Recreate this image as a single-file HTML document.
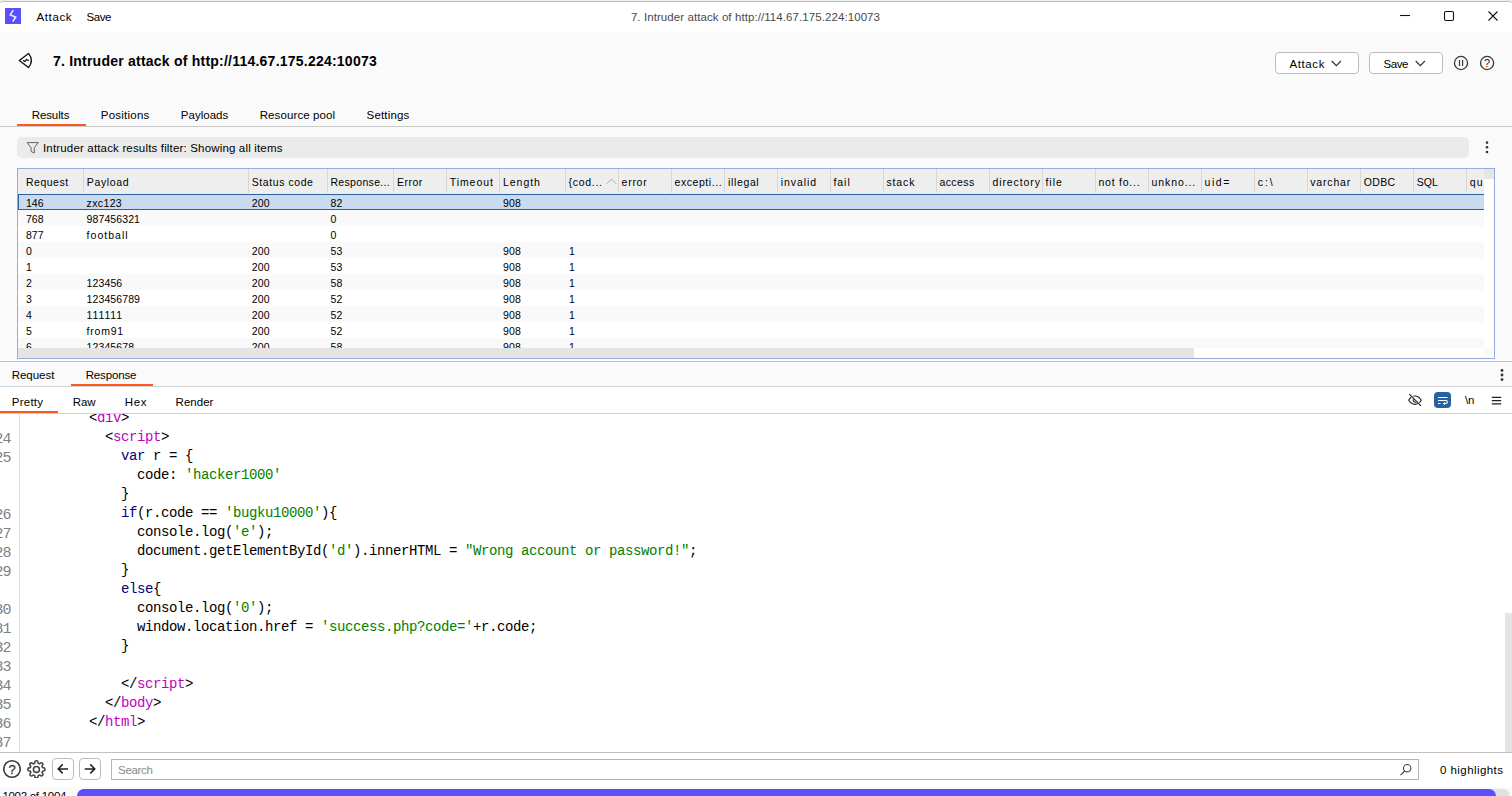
<!DOCTYPE html>
<html><head><meta charset="utf-8"><title>7. Intruder attack of http://114.67.175.224:10073</title>
<style>
*{box-sizing:border-box;margin:0;padding:0}
html,body{width:1512px;height:796px;overflow:hidden;background:#fafafa;font-family:"Liberation Sans",sans-serif;color:#000;font-size:11.5px}
.a{position:absolute;white-space:nowrap}
#titlebar{left:0;top:0;width:1512px;height:32px;background:#fff;border-top:1px solid #eee;box-shadow:inset 0 1px 0 #bdbdbd}
.t{line-height:16px;height:16px}
.hl{height:1px;background:#c9c9c9}
.btn{border:1px solid #c2baba;border-radius:4px;background:#fff}
/* table */
#tbl{left:17px;top:168px;width:1478px;height:191px;border:1px solid #8fb0dc;background:#fff;overflow:hidden}
#thead{left:0;top:0;width:1476px;height:25px;background:#eeeeee}
.th{top:5px;line-height:16px}
.sep{top:0;width:1px;height:24px;background:#d6d6d6}
.row{left:0;width:1466px;height:16px}
.row span{position:absolute;top:0;line-height:16px;white-space:nowrap}
.g{background:#f9f9f9}
/* code */
#code{left:0;top:414px;width:1512px;height:338px;background:#fff;overflow:hidden}
.cl{left:0;height:19px;line-height:19px;font-family:"Liberation Mono",monospace;font-size:14px;letter-spacing:-0.401px;white-space:pre;color:#000}
.ln{color:#808080;font-size:15px;letter-spacing:-1.001px}
.tag{color:#c000c0}.kw{color:#000080}.str{color:#008000}
</style></head><body>
<div class="a" id="titlebar"></div>
<div class="a" style="left:0;top:2px;width:1px;height:1px;background:#c4c4c4"></div><div class="a" style="left:1511px;top:2px;width:1px;height:1px;background:#c4c4c4"></div><div class="a" style="left:0;top:1px;width:2px;height:1px;background:#e4e4e4"></div><div class="a" style="left:1510px;top:1px;width:2px;height:1px;background:#e4e4e4"></div>
<div class="a" style="left:5px;top:8px;width:16px;height:16px;background:#5c50fe"><svg width="16" height="16" viewBox="0 0 16 16"><path d="M8.300 2.200 L5.200 6.900 L10.700 9 L7.700 13.700" fill="none" stroke="#fff" stroke-width="1.500" stroke-linejoin="miter" opacity="0.900"/></svg></div>
<div class="a t" style="left:36.40px;top:9px;font-size:11.5px;letter-spacing:0.646px;">Attack</div>
<div class="a t" style="left:86.40px;top:9px;font-size:11.5px;letter-spacing:-0.406px;">Save</div>
<div class="a t" style="left:630.90px;top:9px;font-size:11.5px;letter-spacing:0.079px;color:#4a4a4a">7. Intruder attack of http://114.67.175.224:10073</div>
<svg class="a" style="left:1396px;top:7px" width="110" height="18" viewBox="0 0 110 18"><g fill="none" stroke="#111" stroke-width="1.1"><path d="M4 8.5h10"/><rect x="48.500" y="4.500" width="9" height="9" rx="1.500"/><path d="M92.500 4.500l9 9M101.500 4.500l-9 9"/></g></svg>

<svg class="a" style="left:18px;top:52px" width="18" height="18" viewBox="0 0 18 18"><path d="M1.300 8.500 L10.500 1.400 Q16.300 8.500 10.500 15.600 Z" fill="none" stroke="#111" stroke-width="1.300" stroke-linejoin="round"/><path d="M5.500 8.600 L7.100 9.500 L8.300 7.500 L10.300 8.400" fill="none" stroke="#111" stroke-width="1.250" stroke-linejoin="round" stroke-linecap="round"/></svg>
<div class="a t" style="left:52.90px;top:53px;font-size:14px;letter-spacing:0.229px;font-weight:bold">7. Intruder attack of http://114.67.175.224:10073</div>

<div class="a btn" style="left:1275px;top:52px;width:84px;height:22px"></div>
<div class="a t" style="left:1289.40px;top:56px;font-size:11.5px;letter-spacing:0.606px;">Attack</div>
<svg class="a" style="left:1330px;top:59px" width="12" height="9" viewBox="0 0 12 9"><path d="M1.700 2l4.600 4.600L10.900 2" fill="none" stroke="#333" stroke-width="1.200"/></svg>
<div class="a btn" style="left:1369px;top:52px;width:74px;height:22px"></div>
<div class="a t" style="left:1383.40px;top:56px;font-size:11.5px;letter-spacing:-0.406px;">Save</div>
<svg class="a" style="left:1414px;top:59px" width="12" height="9" viewBox="0 0 12 9"><path d="M1.700 2l4.600 4.600L10.900 2" fill="none" stroke="#333" stroke-width="1.200"/></svg>
<svg class="a" style="left:1453px;top:55px" width="16" height="16" viewBox="0 0 16 16"><circle cx="8" cy="8" r="6.550" fill="none" stroke="#3a3a3a" stroke-width="1.300"/><path d="M6.500 5v6M9.600 5v6" stroke="#3a3a3a" stroke-width="1.200"/></svg>
<svg class="a" style="left:1479px;top:55px" width="16" height="16" viewBox="0 0 16 16"><circle cx="8.100" cy="8" r="6.550" fill="none" stroke="#3a3a3a" stroke-width="1.300"/><text x="8.100" y="12" font-size="11" text-anchor="middle" font-family="Liberation Sans, sans-serif" fill="#222">?</text></svg>

<!-- tabs -->
<div class="a t" style="left:31.80px;top:107px;font-size:11.5px;letter-spacing:-0.127px;">Results</div>
<div class="a t" style="left:100.80px;top:107px;font-size:11.5px;letter-spacing:0.229px;">Positions</div>
<div class="a t" style="left:180.80px;top:107px;font-size:11.5px;letter-spacing:0.013px;">Payloads</div>
<div class="a t" style="left:259.70px;top:107px;font-size:11.5px;letter-spacing:0.104px;">Resource pool</div>
<div class="a t" style="left:366.60px;top:107px;font-size:11.5px;letter-spacing:0.162px;">Settings</div>
<div class="a" style="left:17px;top:124px;width:69px;height:2px;background:#fe5a1f"></div>
<div class="a hl" style="left:0;top:126px;width:1512px"></div>

<!-- filter -->
<div class="a" style="left:17px;top:137px;width:1452px;height:21px;background:#ebebeb;border-radius:5px"></div>
<svg class="a" style="left:25px;top:141px" width="15" height="14" viewBox="0 0 15 14"><path d="M2 1.600h11.300L9.300 6.600v5.400L6.100 10.500V6.600Z" fill="none" stroke="#666" stroke-width="1"/></svg>
<div class="a t" style="left:43.00px;top:140px;font-size:11.5px;letter-spacing:0.167px;">Intruder attack results filter: Showing all items</div>
<svg class="a" style="left:1484px;top:140px" width="6" height="15" viewBox="0 0 6 15"><g fill="#333"><circle cx="3" cy="2.600" r="1.300"/><circle cx="3" cy="7.300" r="1.300"/><circle cx="3" cy="12" r="1.300"/></g></svg>

<!-- table -->
<div class="a" id="tbl">
<div class="a" id="thead"></div>
<div class="a" style="left:1466px;top:0;width:10px;height:10px;background:#e6e6e6"></div>
<div class="a" style="left:1466px;top:10px;width:10px;height:169px;background:#fff"></div>
<div class="a t" style="left:7.90px;top:5px;font-size:10.5px;letter-spacing:0.532px;">Request</div>
<div class="a t" style="left:68.80px;top:5px;font-size:10.5px;letter-spacing:0.658px;">Payload</div>
<div class="a t" style="left:233.80px;top:5px;font-size:10.5px;letter-spacing:0.565px;">Status code</div>
<div class="a t" style="left:312.40px;top:5px;font-size:10.5px;letter-spacing:0.335px;">Response...</div>
<div class="a t" style="left:378.90px;top:5px;font-size:10.5px;letter-spacing:0.514px;">Error</div>
<div class="a t" style="left:431.70px;top:5px;font-size:10.5px;letter-spacing:0.942px;">Timeout</div>
<div class="a t" style="left:485.00px;top:5px;font-size:10.5px;letter-spacing:0.955px;">Length</div>
<div class="a t" style="left:550.50px;top:5px;font-size:10.5px;letter-spacing:0.716px;">{cod...</div>
<div class="a t" style="left:603.60px;top:5px;font-size:10.5px;letter-spacing:0.732px;">error</div>
<div class="a t" style="left:656.60px;top:5px;font-size:10.5px;letter-spacing:0.552px;">excepti...</div>
<div class="a t" style="left:710.10px;top:5px;font-size:10.5px;letter-spacing:0.623px;">illegal</div>
<div class="a t" style="left:762.70px;top:5px;font-size:10.5px;letter-spacing:0.936px;">invalid</div>
<div class="a t" style="left:815.40px;top:5px;font-size:10.5px;letter-spacing:0.987px;">fail</div>
<div class="a t" style="left:868.40px;top:5px;font-size:10.5px;letter-spacing:0.871px;">stack</div>
<div class="a t" style="left:921.40px;top:5px;font-size:10.5px;letter-spacing:0.422px;">access</div>
<div class="a t" style="left:974.40px;top:5px;font-size:10.5px;letter-spacing:0.917px;">directory</div>
<div class="a t" style="left:1027.40px;top:5px;font-size:10.5px;letter-spacing:1.021px;">file</div>
<div class="a t" style="left:1080.40px;top:5px;font-size:10.5px;letter-spacing:0.784px;">not fo...</div>
<div class="a t" style="left:1133.50px;top:5px;font-size:10.5px;letter-spacing:0.904px;">unkno...</div>
<div class="a t" style="left:1186.50px;top:5px;font-size:10.5px;letter-spacing:1.581px;">uid=</div>
<div class="a t" style="left:1239.80px;top:5px;font-size:10.5px;letter-spacing:1.853px;">c:\</div>
<div class="a t" style="left:1292.30px;top:5px;font-size:10.5px;letter-spacing:0.814px;">varchar</div>
<div class="a t" style="left:1345.80px;top:5px;font-size:10.5px;letter-spacing:0.352px;">ODBC</div>
<div class="a t" style="left:1398.80px;top:5px;font-size:10.5px;letter-spacing:0.042px;">SQL</div>
<div class="a t" style="left:1451.80px;top:5px;font-size:10.5px;letter-spacing:1.112px;">qu</div>
<div class="a sep" style="left:65px"></div>
<div class="a sep" style="left:230px"></div>
<div class="a sep" style="left:309px"></div>
<div class="a sep" style="left:375px"></div>
<div class="a sep" style="left:428px"></div>
<div class="a sep" style="left:481px"></div>
<div class="a sep" style="left:547px"></div>
<div class="a sep" style="left:600px"></div>
<div class="a sep" style="left:653px"></div>
<div class="a sep" style="left:706px"></div>
<div class="a sep" style="left:759px"></div>
<div class="a sep" style="left:812px"></div>
<div class="a sep" style="left:865px"></div>
<div class="a sep" style="left:918px"></div>
<div class="a sep" style="left:971px"></div>
<div class="a sep" style="left:1024px"></div>
<div class="a sep" style="left:1077px"></div>
<div class="a sep" style="left:1130px"></div>
<div class="a sep" style="left:1183px"></div>
<div class="a sep" style="left:1236px"></div>
<div class="a sep" style="left:1289px"></div>
<div class="a sep" style="left:1342px"></div>
<div class="a sep" style="left:1395px"></div>
<div class="a sep" style="left:1448px"></div>
<svg class="a" style="left:588px;top:9px" width="11" height="7" viewBox="0 0 11 7"><path d="M0.800 5.800l4.700-4.700 4.700 4.700" fill="none" stroke="#aaa" stroke-width="1"/></svg>
<div class="row a" style="top:25px;background:#c9daf1;border-top:1px solid #2d62a0;border-bottom:1px solid #2d62a0;border-left:1px solid #2d62a0;"></div>
<div class="a t" style="left:7.90px;top:26px;font-size:10.5px;letter-spacing:0.129px;">146</div>
<div class="a t" style="left:68.60px;top:26px;font-size:10.5px;letter-spacing:0.364px;">zxc123</div>
<div class="a t" style="left:233.80px;top:26px;font-size:10.5px;letter-spacing:0.129px;">200</div>
<div class="a t" style="left:312.40px;top:26px;font-size:10.5px;letter-spacing:0.173px;">82</div>
<div class="a t" style="left:485.00px;top:26px;font-size:10.5px;letter-spacing:0.129px;">908</div>
<div class="row a g" style="top:41px;"></div>
<div class="a t" style="left:7.90px;top:42px;font-size:10.5px;letter-spacing:0.129px;">768</div>
<div class="a t" style="left:68.60px;top:42px;font-size:10.5px;letter-spacing:0.101px;">987456321</div>
<div class="a t" style="left:312.40px;top:42px;font-size:10.5px;letter-spacing:0.086px;">0</div>
<div class="row a" style="top:57px;"></div>
<div class="a t" style="left:7.90px;top:58px;font-size:10.5px;letter-spacing:0.129px;">877</div>
<div class="a t" style="left:68.60px;top:58px;font-size:10.5px;letter-spacing:1.020px;">football</div>
<div class="a t" style="left:312.40px;top:58px;font-size:10.5px;letter-spacing:0.086px;">0</div>
<div class="row a g" style="top:73px;"></div>
<div class="a t" style="left:7.90px;top:74px;font-size:10.5px;letter-spacing:0.086px;">0</div>
<div class="a t" style="left:233.80px;top:74px;font-size:10.5px;letter-spacing:0.129px;">200</div>
<div class="a t" style="left:312.40px;top:74px;font-size:10.5px;letter-spacing:0.173px;">53</div>
<div class="a t" style="left:485.00px;top:74px;font-size:10.5px;letter-spacing:0.129px;">908</div>
<div class="a t" style="left:550.90px;top:74px;font-size:10.5px;letter-spacing:0.086px;">1</div>
<div class="row a" style="top:89px;"></div>
<div class="a t" style="left:7.90px;top:90px;font-size:10.5px;letter-spacing:0.086px;">1</div>
<div class="a t" style="left:233.80px;top:90px;font-size:10.5px;letter-spacing:0.129px;">200</div>
<div class="a t" style="left:312.40px;top:90px;font-size:10.5px;letter-spacing:0.173px;">53</div>
<div class="a t" style="left:485.00px;top:90px;font-size:10.5px;letter-spacing:0.129px;">908</div>
<div class="a t" style="left:550.90px;top:90px;font-size:10.5px;letter-spacing:0.086px;">1</div>
<div class="row a g" style="top:105px;"></div>
<div class="a t" style="left:7.90px;top:106px;font-size:10.5px;letter-spacing:0.086px;">2</div>
<div class="a t" style="left:68.60px;top:106px;font-size:10.5px;letter-spacing:0.107px;">123456</div>
<div class="a t" style="left:233.80px;top:106px;font-size:10.5px;letter-spacing:0.129px;">200</div>
<div class="a t" style="left:312.40px;top:106px;font-size:10.5px;letter-spacing:0.173px;">58</div>
<div class="a t" style="left:485.00px;top:106px;font-size:10.5px;letter-spacing:0.129px;">908</div>
<div class="a t" style="left:550.90px;top:106px;font-size:10.5px;letter-spacing:0.086px;">1</div>
<div class="row a" style="top:121px;"></div>
<div class="a t" style="left:7.90px;top:122px;font-size:10.5px;letter-spacing:0.086px;">3</div>
<div class="a t" style="left:68.60px;top:122px;font-size:10.5px;letter-spacing:0.101px;">123456789</div>
<div class="a t" style="left:233.80px;top:122px;font-size:10.5px;letter-spacing:0.129px;">200</div>
<div class="a t" style="left:312.40px;top:122px;font-size:10.5px;letter-spacing:0.173px;">52</div>
<div class="a t" style="left:485.00px;top:122px;font-size:10.5px;letter-spacing:0.129px;">908</div>
<div class="a t" style="left:550.90px;top:122px;font-size:10.5px;letter-spacing:0.086px;">1</div>
<div class="row a g" style="top:137px;"></div>
<div class="a t" style="left:7.90px;top:138px;font-size:10.5px;letter-spacing:0.086px;">4</div>
<div class="a t" style="left:68.60px;top:138px;font-size:10.5px;letter-spacing:0.885px;">111111</div>
<div class="a t" style="left:233.80px;top:138px;font-size:10.5px;letter-spacing:0.129px;">200</div>
<div class="a t" style="left:312.40px;top:138px;font-size:10.5px;letter-spacing:0.173px;">52</div>
<div class="a t" style="left:485.00px;top:138px;font-size:10.5px;letter-spacing:0.129px;">908</div>
<div class="a t" style="left:550.90px;top:138px;font-size:10.5px;letter-spacing:0.086px;">1</div>
<div class="row a" style="top:153px;"></div>
<div class="a t" style="left:7.90px;top:154px;font-size:10.5px;letter-spacing:0.086px;">5</div>
<div class="a t" style="left:68.60px;top:154px;font-size:10.5px;letter-spacing:0.782px;">from91</div>
<div class="a t" style="left:233.80px;top:154px;font-size:10.5px;letter-spacing:0.129px;">200</div>
<div class="a t" style="left:312.40px;top:154px;font-size:10.5px;letter-spacing:0.173px;">52</div>
<div class="a t" style="left:485.00px;top:154px;font-size:10.5px;letter-spacing:0.129px;">908</div>
<div class="a t" style="left:550.90px;top:154px;font-size:10.5px;letter-spacing:0.086px;">1</div>
<div class="row a g" style="top:169px;"></div>
<div class="a t" style="left:7.90px;top:170px;font-size:10.5px;letter-spacing:0.086px;">6</div>
<div class="a t" style="left:68.60px;top:170px;font-size:10.5px;letter-spacing:0.103px;">12345678</div>
<div class="a t" style="left:233.80px;top:170px;font-size:10.5px;letter-spacing:0.129px;">200</div>
<div class="a t" style="left:312.40px;top:170px;font-size:10.5px;letter-spacing:0.173px;">58</div>
<div class="a t" style="left:485.00px;top:170px;font-size:10.5px;letter-spacing:0.129px;">908</div>
<div class="a t" style="left:550.90px;top:170px;font-size:10.5px;letter-spacing:0.086px;">1</div>
<div class="a" style="left:0;top:179px;width:1476px;height:10px;background:#fff"></div>
<div class="a" style="left:0;top:179px;width:1176px;height:10px;background:#e4e4e4"></div>
<div class="a" style="left:1466px;top:179px;width:9px;height:10px;background:#fafafa"></div>
</div>

<!-- lower tabs -->
<div class="a hl" style="left:0;top:361px;width:1512px;background:#c6bfbf"></div>
<div class="a t" style="left:11.70px;top:367px;font-size:11.5px;letter-spacing:-0.024px;">Request</div>
<div class="a t" style="left:85.70px;top:367px;font-size:11.5px;letter-spacing:-0.157px;">Response</div>
<div class="a" style="left:71px;top:384px;width:82px;height:2px;background:#fe5a1f"></div>
<div class="a hl" style="left:0;top:386px;width:1512px;background:#cfd3d6"></div>
<svg class="a" style="left:1499px;top:368px" width="6" height="15" viewBox="0 0 6 15"><g fill="#333"><circle cx="3" cy="2.400" r="1.400"/><circle cx="3" cy="7" r="1.400"/><circle cx="3" cy="11.600" r="1.400"/></g></svg>
<div class="a" style="left:0;top:387px;width:1512px;height:26px;background:#fff"></div>
<div class="a t" style="left:11.70px;top:394px;font-size:11.5px;letter-spacing:0.271px;">Pretty</div>
<div class="a t" style="left:72.80px;top:394px;font-size:11.5px;letter-spacing:-0.108px;">Raw</div>
<div class="a t" style="left:124.80px;top:394px;font-size:11.5px;letter-spacing:0.573px;">Hex</div>
<div class="a t" style="left:175.60px;top:394px;font-size:11.5px;letter-spacing:0.016px;">Render</div>
<div class="a" style="left:0;top:411px;width:58px;height:2px;background:#fe5a1f"></div>
<div class="a hl" style="left:0;top:413px;width:1512px;background:#cfd3d6"></div>
<svg class="a" style="left:1407px;top:392px" width="16" height="16" viewBox="0 0 16 16"><g fill="none" stroke="#222" stroke-width="1.150"><path d="M4.300 5.200C2.900 6.200 2.100 7.400 1.800 8.200 3.500 11 5.600 12.300 8 12.300c1 0 1.900-.2 2.800-.700M6.300 4.300C6.800 4.100 7.400 4 8 4c2.400 0 4.500 1.300 6.200 4.200-.5.900-1.100 1.700-1.800 2.300"/><path d="M6.400 7.200a2.100 2.100 0 0 0 2.800 2.800"/><path d="M2.300 2.200l11.700 11.600"/></g></svg>
<div class="a" style="left:1434px;top:392px;width:17px;height:16px;background:#27629f;border-radius:4px"></div>
<svg class="a" style="left:1434px;top:392px" width="17" height="16" viewBox="0 0 17 16"><g fill="none" stroke="#fff" stroke-width="1.200"><path d="M4 5.500h9.500M4 8.500h7.800a1.500 1.500 0 0 1 0 3H9.800M4 11.500h2.500"/></g><path d="M10.800 9.900l-2 1.600 2 1.600Z" fill="#fff"/></svg>
<div class="a t" style="left:1464.90px;top:392px;font-size:11.5px;letter-spacing:-0.094px;">\n</div>
<svg class="a" style="left:1491px;top:395px" width="11" height="11" viewBox="0 0 11 11"><path d="M0.800 2.400h9.400M0.800 5.600h9.400M0.800 8.800h9.400" stroke="#222" stroke-width="1.200"/></svg>


<!-- code -->
<div class="a" id="code">
<div class="a" style="left:19px;top:0;width:1px;height:338px;background:#dcdcdc"></div>
<div class="a" style="left:1505px;top:199px;width:7px;height:139px;background:#e4e4e4"></div>
<div class="a cl" style="left:89px;top:-5px">&lt;<span class="tag">div</span>&gt;</div>
<div class="a cl ln" style="left:-5.5px;top:15.5px">24</div>
<div class="a cl" style="left:105px;top:14px">&lt;<span class="tag">script</span>&gt;</div>
<div class="a cl ln" style="left:-5.5px;top:34.5px">25</div>
<div class="a cl" style="left:121px;top:33px"><span class="kw">var</span> r = {</div>
<div class="a cl" style="left:137px;top:52px">code: <span class="str">&#x27;hacker1000&#x27;</span></div>
<div class="a cl" style="left:121px;top:71px">}</div>
<div class="a cl ln" style="left:-5.5px;top:91.5px">26</div>
<div class="a cl" style="left:121px;top:90px"><span class="kw">if</span>(r.code == <span class="str">&#x27;bugku10000&#x27;</span>){</div>
<div class="a cl ln" style="left:-5.5px;top:110.5px">27</div>
<div class="a cl" style="left:137px;top:109px">console.log(<span class="str">&#x27;e&#x27;</span>);</div>
<div class="a cl ln" style="left:-5.5px;top:129.5px">28</div>
<div class="a cl" style="left:137px;top:128px">document.getElementById(<span class="str">&#x27;d&#x27;</span>).innerHTML = <span class="str">&quot;Wrong account or password!&quot;</span>;</div>
<div class="a cl ln" style="left:-5.5px;top:148.5px">29</div>
<div class="a cl" style="left:121px;top:147px">}</div>
<div class="a cl" style="left:121px;top:166px"><span class="kw">else</span>{</div>
<div class="a cl ln" style="left:-5.5px;top:186.5px">30</div>
<div class="a cl" style="left:137px;top:185px">console.log(<span class="str">&#x27;0&#x27;</span>);</div>
<div class="a cl ln" style="left:-5.5px;top:205.5px">31</div>
<div class="a cl" style="left:137px;top:204px">window.location.href = <span class="str">&#x27;success.php?code=&#x27;</span>+r.code;</div>
<div class="a cl ln" style="left:-5.5px;top:224.5px">32</div>
<div class="a cl" style="left:121px;top:223px">}</div>
<div class="a cl ln" style="left:-5.5px;top:243.5px">33</div>
<div class="a cl ln" style="left:-5.5px;top:262.5px">34</div>
<div class="a cl" style="left:121px;top:261px">&lt;/<span class="tag">script</span>&gt;</div>
<div class="a cl ln" style="left:-5.5px;top:281.5px">35</div>
<div class="a cl" style="left:105px;top:280px">&lt;/<span class="tag">body</span>&gt;</div>
<div class="a cl ln" style="left:-5.5px;top:300.5px">36</div>
<div class="a cl" style="left:89px;top:299px">&lt;/<span class="tag">html</span>&gt;</div>
<div class="a cl ln" style="left:-5.5px;top:319.5px">37</div>
</div>

<!-- bottom -->
<div class="a" style="left:0;top:753px;width:1512px;height:34px;background:#fff"></div>
<div class="a hl" style="left:0;top:752px;width:1512px;background:#c6bfbf"></div>
<svg class="a" style="left:2px;top:758.700px" width="20" height="20" viewBox="0 0 20 20"><circle cx="10" cy="10" r="8.300" fill="none" stroke="#3a3a3a" stroke-width="1.600"/><text x="10" y="14.700" font-size="13" text-anchor="middle" font-family="Liberation Sans, sans-serif" fill="#3a3a3a" stroke="#3a3a3a" stroke-width="0.300">?</text></svg>
<svg class="a" style="left:27.400px;top:759.500px" width="18.800" height="18.800" viewBox="0 0 24 24"><g fill="none" stroke="#444" stroke-width="2" stroke-linejoin="round"><circle cx="12" cy="12" r="3.800"/><path d="M19.400 15a1.650 1.650 0 0 0 .33 1.820l.06.06a2 2 0 1 1-2.830 2.830l-.06-.06a1.650 1.650 0 0 0-1.820-.33 1.650 1.650 0 0 0-1 1.510V21a2 2 0 0 1-4 0v-.09A1.650 1.650 0 0 0 9 19.400a1.650 1.650 0 0 0-1.820.33l-.06.06a2 2 0 1 1-2.830-2.830l.06-.06a1.650 1.650 0 0 0 .33-1.820 1.650 1.650 0 0 0-1.510-1H3a2 2 0 0 1 0-4h.09A1.650 1.650 0 0 0 4.600 9a1.650 1.650 0 0 0-.33-1.820l-.06-.06a2 2 0 1 1 2.830-2.830l.06.06a1.650 1.650 0 0 0 1.820.33H9a1.650 1.650 0 0 0 1-1.510V3a2 2 0 0 1 4 0v.09a1.650 1.650 0 0 0 1 1.510 1.650 1.650 0 0 0 1.820-.33l.06-.06a2 2 0 1 1 2.830 2.830l-.06.06a1.650 1.650 0 0 0-.33 1.820V9a1.650 1.650 0 0 0 1.510 1H21a2 2 0 0 1 0 4h-.09a1.650 1.650 0 0 0-1.510 1z"/></g></svg>
<div class="a btn" style="left:52px;top:758px;width:22px;height:22px"></div>
<svg class="a" style="left:52px;top:758px" width="22" height="22" viewBox="0 0 22 22"><path d="M16 10.900H6.800M10.700 6.400L6.200 10.900l4.500 4.500" fill="none" stroke="#222" stroke-width="1.500"/></svg>
<div class="a btn" style="left:79px;top:758px;width:22px;height:22px"></div>
<svg class="a" style="left:79px;top:758px" width="22" height="22" viewBox="0 0 22 22"><path d="M5.700 10.900h9.300M11.300 6.400l4.500 4.500-4.500 4.500" fill="none" stroke="#222" stroke-width="1.500"/></svg>
<div class="a" style="left:111px;top:759px;width:1308px;height:21px;background:#fff;border:1px solid #b9b2b2"></div>
<div class="a t" style="left:118.10px;top:762px;font-size:11.5px;letter-spacing:-0.347px;color:#8a8a8a">Search</div>
<svg class="a" style="left:1399px;top:763px" width="14" height="14" viewBox="0 0 14 14"><g fill="none" stroke="#444" stroke-width="1.100"><circle cx="8.200" cy="5.200" r="3.700"/><path d="M5.600 8L1.500 12.200"/></g></svg>
<div class="a t" style="left:1440.10px;top:762px;font-size:11.5px;letter-spacing:0.428px;">0 highlights</div>
<div class="a" style="left:77px;top:789px;width:1433px;height:14px;background:#e0e0e0;border-radius:7px"></div>
<div class="a" style="left:77px;top:789px;width:1419px;height:14px;background:#5b4ffa;border-radius:7px"></div>
<div class="a t" style="left:2.40px;top:788px;font-size:11.5px;letter-spacing:-0.287px;">1002 of 1004</div>

</body></html>
